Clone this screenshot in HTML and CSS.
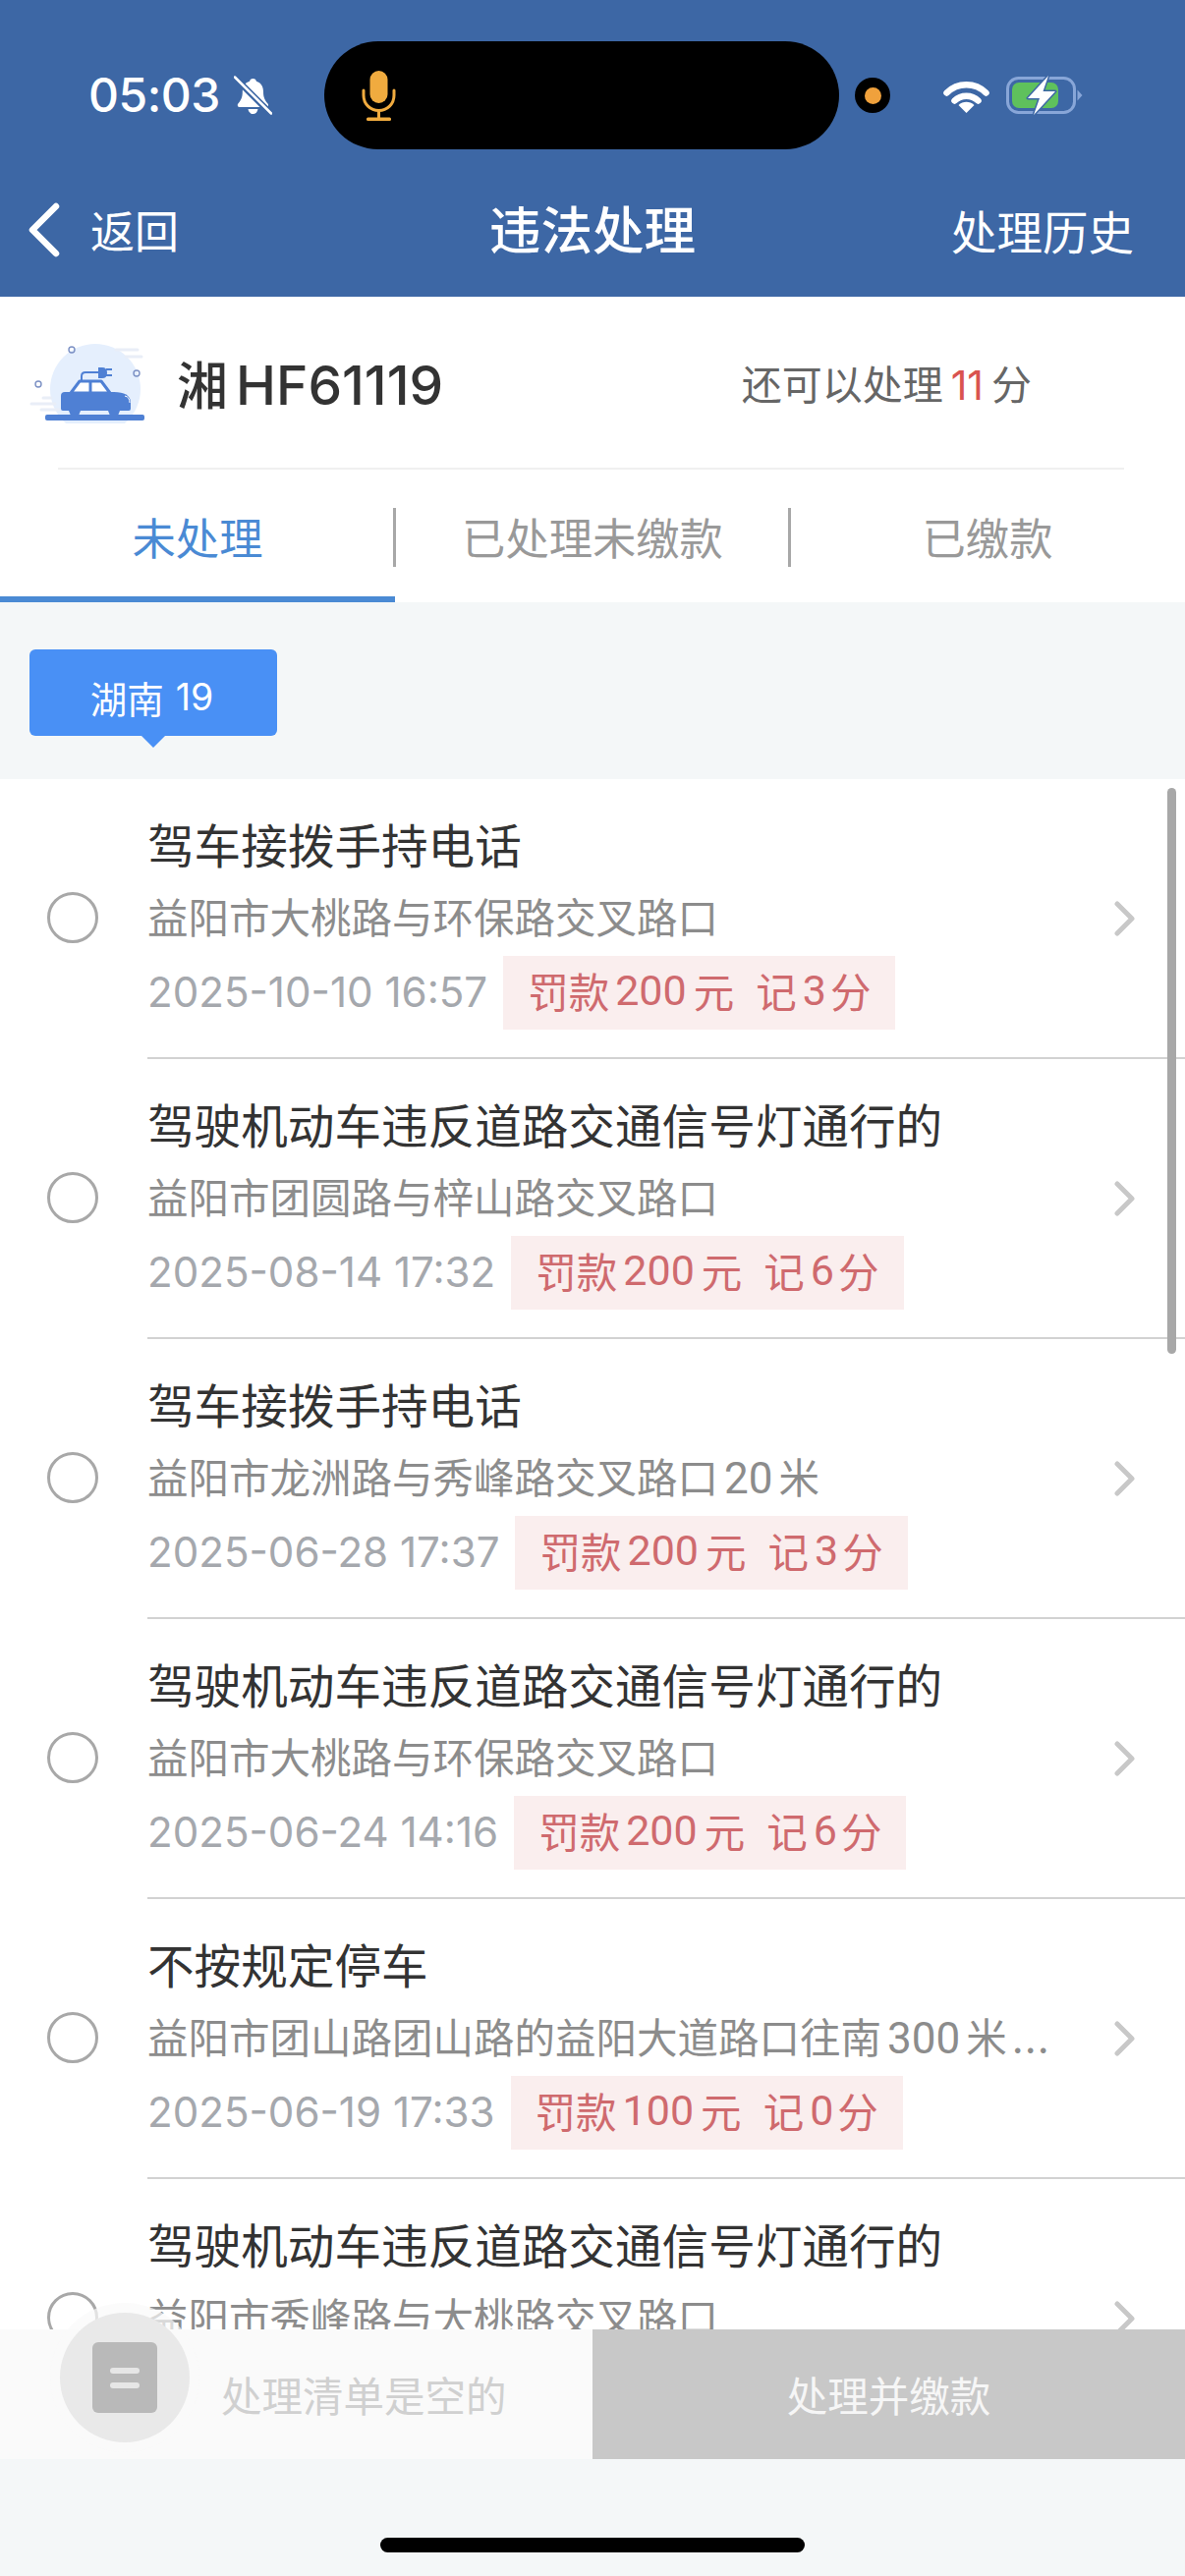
FILE: index.html
```html
<!DOCTYPE html>
<html lang="zh-CN">
<head>
<meta charset="utf-8">
<title>违法处理</title>
<link rel="stylesheet" href="styles.css">
</head>
<body>
<div class="app">
  <header class="header">
    <div class="status">
      <span class="time">05:03</span>
      <svg class="bell" viewBox="0 0 39 40"><path d="M19.500 3c2 0 3.200 1.300 3.400 2.800 5 1.400 7.100 5.600 7.100 10.700 0 5.500 1.500 8.500 4.500 12 1.200 1.500.3 3.500-1.700 3.500H6c-2 0-2.900-2-1.700-3.500 3-3.500 4.500-6.500 4.500-12 0-5.100 2.100-9.300 7.300-10.700C16.300 4.300 17.500 3 19.500 3z" fill="#fff"/><path d="M14.500 34h10c-.4 3-2.500 5-5 5s-4.600-2-5-5z" fill="#fff"/><path d="M1.500 2.500 36 37" stroke="#3d67a5" stroke-width="6.500"/><path d="M1 1.500 38 38.500" stroke="#fff" stroke-width="2.500" stroke-linecap="round"/></svg>
      <div class="island">
        <svg class="mic" viewBox="0 0 35 51"><rect x="8.500" y="0" width="18" height="33" rx="9" fill="#f0ab3f"/><path d="M2 20v5c0 9 7 15.500 15.500 15.500S33 34 33 25v-5" fill="none" stroke="#f0ab3f" stroke-width="3" stroke-linecap="round"/><path d="M17.500 40v9" stroke="#f0ab3f" stroke-width="3"/><rect x="5" y="47.500" width="25" height="3.500" rx="1.500" fill="#f0ab3f"/></svg>
      </div>
      <span class="cam"><i class="cam-dot"></i></span>
      <svg class="wifi" viewBox="0 0 47 35"><path d="M3.500 14.500C14.500 3.500 32.500 3.500 43.500 14.500" fill="none" stroke="#fff" stroke-width="6.500" stroke-linecap="round"/><path d="M11.500 22.500C18 16 29 16 35.500 22.500" fill="none" stroke="#fff" stroke-width="6.500" stroke-linecap="round"/><path d="M23.500 35 15.500 27c4.500-4.300 11.500-4.300 16 0z" fill="#fff"/></svg>
      <svg class="battery" viewBox="0 0 78 40"><rect x="1.500" y="2.500" width="68" height="35" rx="11" fill="none" stroke="#88a6d8" stroke-width="3"/><rect x="6" y="7" width="47" height="26" rx="7" fill="#5fc15c"/><path d="M72.500 14.500 77.500 20l-5 5.500z" fill="#88a6d8"/><path d="M43 0 22 23h12l-6 17 22-24H37.500z" fill="#fff" stroke="#3d67a5" stroke-width="3" stroke-linejoin="round" paint-order="stroke"/></svg>
    </div>
    <nav class="nav">
      <div class="back">
        <svg class="back-icon" viewBox="0 0 35 56"><path d="M30 4 6 28l24 24" fill="none" stroke="#fff" stroke-width="6.500" stroke-linecap="round" stroke-linejoin="round"/></svg>
        <span>返回</span>
      </div>
      <h1 class="title">违法处理</h1>
      <div class="history">处理历史</div>
    </nav>
  </header>

  <section class="plate">
    <div class="plate-left">
      <svg class="car" viewBox="0 0 118 84">
        <circle cx="67" cy="49" r="46" fill="#e5effd"/>
        <path d="M88 9h22M98 16h16M2 64h24M14 58h8M12 70h18" stroke="#e9eef7" stroke-width="3" stroke-linecap="round"/>
        <g fill="none" stroke="#7b90c4" stroke-width="1.400"><circle cx="43" cy="9" r="3"/><circle cx="109" cy="33" r="3"/><circle cx="9" cy="44" r="3"/></g>
        <path d="M53 42v-6q0-4 4-4h13" fill="none" stroke="#4f80d4" stroke-width="2"/>
        <path d="M70 27h4q5 0 5 5.500T74 38h-4z" fill="#4f80d4"/>
        <path d="M78 29h6M78 35h6" stroke="#4f80d4" stroke-width="2"/>
        <path d="M42 53 51 41h22l9 12z" fill="#fff" stroke="#4f80d4" stroke-width="3" stroke-linejoin="round"/>
        <path d="M62 41v12" stroke="#4f80d4" stroke-width="3"/>
        <path d="M36 52h50q16 0 17 10v7q0 2-2 2H34q-2 0-2-2V56q0-4 4-4z" fill="#4f80d4"/>
        <path d="M97 56q5 1 5 7" fill="none" stroke="#fff" stroke-width="1"/>
        <path d="M40 71h12l-2 5h-8zM80 71h12l-2 5h-8z" fill="#4f80d4"/>
        <rect x="16" y="75" width="101" height="6" rx="2" fill="#4f80d4"/>
      </svg>
      <span class="plate-no">湘<b class="plate-num">HF61119</b></span>
    </div>
    <div class="points">还可以处理<em class="points-num">11</em>分</div>
  </section>

  <div class="tabs">
    <div class="tab tab-active">未处理</div>
    <div class="tab tab-sep">已处理未缴款</div>
    <div class="tab tab-sep">已缴款</div>
  </div>

  <div class="region">
    <div class="region-tag"><span>湖南</span><span class="region-num">19</span></div>
  </div>

  <main class="list">
    <article class="row">
      <span class="radio"></span>
      <div class="row-main">
        <div class="row-body">
          <h2 class="row-title">驾车接拨手持电话</h2>
          <p class="row-place">益阳市大桃路与环保路交叉路口</p>
          <div class="row-meta"><time class="date">2025-10-10 16:57</time><span class="fine">罚款<b class="fine-amt">200</b>元<span class="fine-pt">记<b class="fine-num">3</b>分</span></span></div>
        </div>
        <svg class="chev" viewBox="0 0 22 36"><path d="M3 3l15 15L3 33" fill="none" stroke="#c8c8c8" stroke-width="5" stroke-linecap="round" stroke-linejoin="round"/></svg>
      </div>
    </article>
    <article class="row">
      <span class="radio"></span>
      <div class="row-main">
        <div class="row-body">
          <h2 class="row-title">驾驶机动车违反道路交通信号灯通行的</h2>
          <p class="row-place">益阳市团圆路与梓山路交叉路口</p>
          <div class="row-meta"><time class="date">2025-08-14 17:32</time><span class="fine">罚款<b class="fine-amt">200</b>元<span class="fine-pt">记<b class="fine-num">6</b>分</span></span></div>
        </div>
        <svg class="chev" viewBox="0 0 22 36"><path d="M3 3l15 15L3 33" fill="none" stroke="#c8c8c8" stroke-width="5" stroke-linecap="round" stroke-linejoin="round"/></svg>
      </div>
    </article>
    <article class="row">
      <span class="radio"></span>
      <div class="row-main">
        <div class="row-body">
          <h2 class="row-title">驾车接拨手持电话</h2>
          <p class="row-place">益阳市龙洲路与秀峰路交叉路口<span class="place-num">20</span>米</p>
          <div class="row-meta"><time class="date">2025-06-28 17:37</time><span class="fine">罚款<b class="fine-amt">200</b>元<span class="fine-pt">记<b class="fine-num">3</b>分</span></span></div>
        </div>
        <svg class="chev" viewBox="0 0 22 36"><path d="M3 3l15 15L3 33" fill="none" stroke="#c8c8c8" stroke-width="5" stroke-linecap="round" stroke-linejoin="round"/></svg>
      </div>
    </article>
    <article class="row">
      <span class="radio"></span>
      <div class="row-main">
        <div class="row-body">
          <h2 class="row-title">驾驶机动车违反道路交通信号灯通行的</h2>
          <p class="row-place">益阳市大桃路与环保路交叉路口</p>
          <div class="row-meta"><time class="date">2025-06-24 14:16</time><span class="fine">罚款<b class="fine-amt">200</b>元<span class="fine-pt">记<b class="fine-num">6</b>分</span></span></div>
        </div>
        <svg class="chev" viewBox="0 0 22 36"><path d="M3 3l15 15L3 33" fill="none" stroke="#c8c8c8" stroke-width="5" stroke-linecap="round" stroke-linejoin="round"/></svg>
      </div>
    </article>
    <article class="row">
      <span class="radio"></span>
      <div class="row-main">
        <div class="row-body">
          <h2 class="row-title">不按规定停车</h2>
          <p class="row-place">益阳市团山路团山路的益阳大道路口往南<span class="place-num">300</span>米<span class="place-more">...</span></p>
          <div class="row-meta"><time class="date">2025-06-19 17:33</time><span class="fine">罚款<b class="fine-amt">100</b>元<span class="fine-pt">记<b class="fine-num">0</b>分</span></span></div>
        </div>
        <svg class="chev" viewBox="0 0 22 36"><path d="M3 3l15 15L3 33" fill="none" stroke="#c8c8c8" stroke-width="5" stroke-linecap="round" stroke-linejoin="round"/></svg>
      </div>
    </article>
    <article class="row">
      <span class="radio"></span>
      <div class="row-main">
        <div class="row-body">
          <h2 class="row-title">驾驶机动车违反道路交通信号灯通行的</h2>
          <p class="row-place">益阳市秀峰路与大桃路交叉路口</p>
        </div>
        <svg class="chev" viewBox="0 0 22 36"><path d="M3 3l15 15L3 33" fill="none" stroke="#c8c8c8" stroke-width="5" stroke-linecap="round" stroke-linejoin="round"/></svg>
      </div>
    </article>
    <div class="scrollbar"></div>
  </main>

  <footer class="footer">
    <div class="cart">
      <div class="cart-fab"><span class="cart-doc"><i class="cart-line"></i><i class="cart-line"></i></span></div>
      <div class="cart-info"><span>处理清单是空的</span></div>
      <button class="cart-pay">处理并缴款</button>
    </div>
    <div class="safe"><span class="home"></span></div>
  </footer>
</div>
</body>
</html>
```

FILE: styles.css
```css
* { box-sizing: border-box; }
html, body { margin: 0; padding: 0; }
body {
  width: 1206px;
  height: 2622px;
  overflow: hidden;
  font-family: "Inter", "Noto Sans CJK SC", sans-serif;
  background: #fff;
}
.app { height: 2622px; display: flex; flex-direction: column; }

.header { background: #3d67a5; color: #fff; height: 302px; flex: none; }
.status { display: flex; align-items: center; height: 152px; padding: 42px 0 0 90px; }
.time { width: 132px; font-size: 48px; font-weight: 500; letter-spacing: -.5px; white-space: nowrap; line-height: 1; }
.bell { width: 39px; height: 40px; margin-left: 16px; }
.island { width: 524px; height: 110px; margin-left: 53px; background: #000; border-radius: 55px; display: flex; align-items: center; padding-left: 38px; }
.mic { width: 35px; height: 51px; }
.cam { width: 36px; height: 36px; margin-left: 16px; background: #000; border-radius: 50%; display: flex; align-items: center; justify-content: center; }
.cam-dot { width: 17px; height: 17px; border-radius: 50%; background: #f0a13c; }
.wifi { width: 47px; height: 35px; margin-left: 54px; }
.battery { width: 78px; height: 40px; margin-left: 17px; }

.nav { display: grid; grid-template-columns: 1fr auto 1fr; align-items: center; height: 150px; padding: 13px 52px 0; }
.back { display: flex; align-items: center; gap: 30px; font-size: 45px; margin-left: -25px; }
.back-icon { width: 35px; height: 56px; }
.title { margin: 3px 0 0; font-size: 52.500px; font-weight: 500; line-height: 1.2; }
.history { text-align: right; font-size: 46.500px; }

.plate { flex: none; height: 176px; margin: 0 62px 0 0; display: flex; justify-content: space-between; align-items: center; position: relative; padding: 0 94px 2px 30px; }
.plate::after { content: ""; position: absolute; left: 59px; right: 0; bottom: 0; height: 2px; background: #f0f0f0; }
.plate-left { display: flex; align-items: center; gap: 32px; }
.car { width: 118px; height: 84px; }
.plate-no { font-size: 52px; font-weight: 500; color: #333; }
.plate-num { font-weight: 500; font-size: 55px; margin-left: 8px; }
.points { font-size: 41px; color: #666; }
.points-num { font-style: normal; color: #d9534f; margin: 0 8px; }

.tabs { flex: none; height: 135px; display: grid; grid-template-columns: repeat(3, 1fr); background: #fff; }
.tab { display: flex; align-items: center; justify-content: center; font-size: 44.300px; color: #999; position: relative; }
.tab-active { color: #4a8ad4; box-shadow: inset 0 -6px 0 #4a8ad4; }
.tab-sep::before { content: ""; position: absolute; left: -2px; top: 39px; width: 3px; height: 60px; background: #a8a8a8; }

.region { flex: none; height: 180px; background: #f4f7f8; padding: 48px 0 0 30px; }
.region-tag { width: 252px; height: 88px; padding-top: 8px; padding-right: 3px; background: #4990f5; border-radius: 6px; color: #fff; font-size: 37.500px; display: flex; align-items: center; justify-content: center; position: relative; }
.region-num { margin-left: 12px; }
.region-tag::after { content: ""; position: absolute; left: 114px; top: 100%; border: 12px solid transparent; border-top-color: #4990f5; border-bottom-width: 0; }

.list { flex: 1; min-height: 0; overflow: hidden; position: relative; background: #fff; }
.row { height: 285px; display: flex; align-items: stretch; }
.radio { flex: none; width: 52px; height: 52px; margin: 115px 0 0 48px; border: 3px solid #a8a8a8; border-radius: 50%; }
.row-main { flex: 1; min-width: 0; margin-left: 50px; display: flex; border-bottom: 2px solid #d2d2d2; padding-right: 50px; }
.row-body { flex: 1; min-width: 0; padding-top: 31px; }
.row-title { margin: 0; height: 76px; line-height: 76px; font-size: 47.600px; font-weight: 400; color: #333; white-space: nowrap; }
.row-place { margin: 0 0 3px; height: 70px; line-height: 70px; font-size: 41.500px; color: #8c8c8c; white-space: nowrap; }
.place-num { font-family: "Roboto", "Inter", sans-serif; font-size: 44px; margin: 0 6px; }
.place-more { margin-left: 5px; letter-spacing: 1px; }
.row-meta { display: flex; align-items: center; gap: 16px; height: 75px; }
.date { font-size: 42.100px; color: #a5a8ad; white-space: nowrap; padding-bottom: 3px; }
.fine { height: 75px; padding: 0 25px 5px; display: flex; align-items: center; background: #faeeee; color: #cf6a6e; font-size: 41.500px; white-space: nowrap; }
.fine-amt { font-family: "Roboto", "Inter", sans-serif; font-weight: 400; font-size: 43px; margin: 0 7px 0 6px; }
.fine-pt { margin-left: 22px; display: flex; align-items: center; }
.fine-num { font-family: "Roboto", "Inter", sans-serif; font-weight: 400; font-size: 43px; margin: 0 4px 0 6px; }
.chev { flex: none; width: 22px; height: 36px; margin-top: 124px; }
.scrollbar { position: absolute; left: 1188px; top: 9px; width: 9px; height: 576px; background: #a8a8a8; border-radius: 5px; }

.footer { flex: none; height: 251px; background: #f4f7f8; }
.cart { height: 132px; display: grid; grid-template-columns: 603px 603px; position: relative; }
.cart-fab { position: absolute; left: 61px; top: -17px; width: 132px; height: 132px; border-radius: 50%; background: #e9e9e9; box-shadow: 0 0 0 10px rgba(250, 250, 250, .7); display: flex; align-items: center; justify-content: center; }
.cart-doc { width: 66px; height: 72px; background: #b9b9b9; border-radius: 6px; display: flex; flex-direction: column; align-items: center; justify-content: center; gap: 9px; }
.cart-line { width: 30px; height: 6px; border-radius: 3px; background: #e6e6e6; }
.cart-info { background: #fafafa; display: flex; align-items: center; padding: 0 0 0 225px; font-size: 41.500px; color: #d0d0d0; }
.cart-pay { border: 0; background: #c8c8c8; color: #f6f6f6; font: inherit; font-size: 41.500px; padding: 0; }
.safe { height: 119px; display: flex; justify-content: center; align-items: flex-end; padding-bottom: 24px; }
.home { width: 432px; height: 15px; background: #000; border-radius: 8px; }
```
